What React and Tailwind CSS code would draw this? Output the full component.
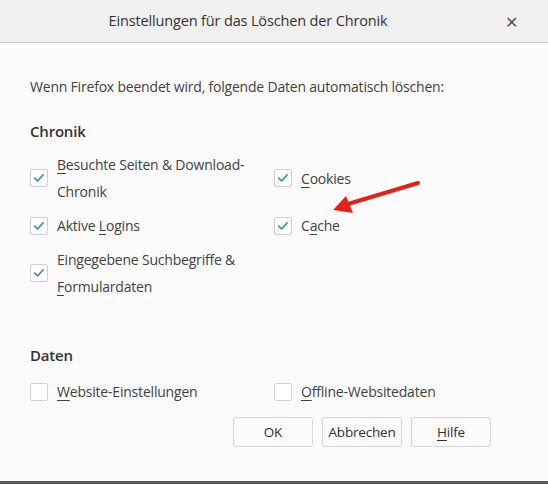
import React from 'react';

const Check = () => (
    <svg width="12" height="10" viewBox="0 0 12 10" className="block">
        <path d="M1.8 5.2 L4.6 8 L10.2 1.8" fill="none" stroke="#3c8ab8" strokeWidth="1.7" strokeLinecap="round" strokeLinejoin="round" />
    </svg>
);

const Box = ({ checked }) => (
    <div className="w-[18px] h-[18px] shrink-0 bg-white border border-[#d0d0d0] rounded-[2px] flex items-center justify-center">
        {checked && <Check />}
    </div>
);

const Option = ({ checked, children }) => (
    <div className="flex items-center gap-[9px]">
        <Box checked={checked} />
        <div className="leading-[27px]">{children}</div>
    </div>
);

const Key = ({ children }) => <u className="underline underline-offset-[3px] decoration-1">{children}</u>;

const Button = ({ children }) => (
    <button className="w-[80px] h-[30px] bg-[#fbfbfb] border border-[#d9d9d9] rounded-[2px] text-[13.5px] tracking-[-0.2px] text-[#2f2f2f]">
        {children}
    </button>
);

export default function App() {
    return (
        <div className="relative w-[548px] h-[484px] flex flex-col bg-[#fbfbfb] text-[#414141] text-[14px] tracking-[-0.2px] font-['Segoe_UI','Open_Sans',sans-serif] overflow-hidden">
            {/* title bar */}
            <div className="h-[43px] shrink-0 bg-[#f0f0f0] border-b border-[#c9c9c9] flex items-center justify-center pr-[52px] relative">
                <span className="text-[14.5px] tracking-[-0.15px] text-[#333]">Einstellungen für das Löschen der Chronik</span>
                <span className="absolute right-[30px] top-[11px] text-[16px] leading-[22px] text-[#555]">✕</span>
            </div>

            <div className="flex-1 pl-[30px] pt-[30px]">
                <p className="leading-[27px]">Wenn Firefox beendet wird, folgende Daten automatisch löschen:</p>

                <h2 className="mt-[19px] text-[15px] leading-[24px] font-semibold text-[#333]">Chronik</h2>
                <div className="mt-[8px] grid grid-cols-[244px_1fr] gap-y-[7px] items-center">
                    <Option checked>
                        <Key>B</Key>esuchte Seiten &amp; Download-<br />Chronik
                    </Option>
                    <Option checked><Key>C</Key>ookies</Option>
                    <Option checked>Aktive <Key>L</Key>ogins</Option>
                    <Option checked>C<Key>a</Key>che</Option>
                    <Option checked>
                        Eingegebene Suchbegriffe &amp;<br /><Key>F</Key>ormulardaten
                    </Option>
                </div>

                <h2 className="mt-[43px] text-[15px] leading-[24px] font-semibold text-[#333]">Daten</h2>
                <div className="mt-[11px] grid grid-cols-[244px_1fr] items-center">
                    <Option><Key>W</Key>ebsite-Einstellungen</Option>
                    <Option><Key>O</Key>ffline-Websitedaten</Option>
                </div>

                <div className="mt-[12px] flex justify-end gap-[9px] pr-[57px]">
                    <Button>OK</Button>
                    <Button>Abbrechen</Button>
                    <Button><Key>H</Key>ilfe</Button>
                </div>
            </div>

            <div className="h-[3px] shrink-0 bg-[#5a5a5a]" />

            {/* red annotation arrow */}
            <svg className="absolute left-0 top-0 pointer-events-none" width="548" height="484">
                <line x1="418" y1="183" x2="348" y2="204" stroke="#e3211c" strokeWidth="4" strokeLinecap="round" />
                <polygon points="333,210 346,196 353,213" fill="#e3211c" />
            </svg>
        </div>
    );
}
